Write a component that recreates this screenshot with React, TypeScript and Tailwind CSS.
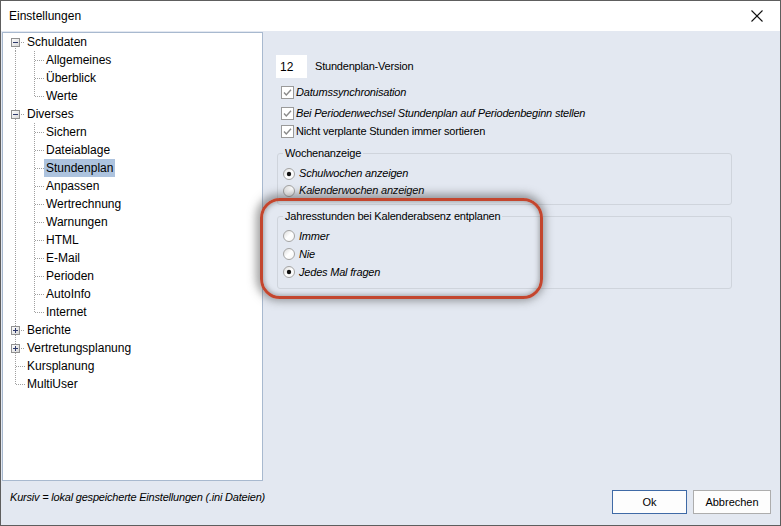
import React from 'react';

type Node = { label: string; level: 0 | 1; exp?: 'minus' | 'plus'; last?: boolean; selected?: boolean; first?: boolean; lastRoot?: boolean };

const tree: Node[] = [
  { label: 'Schuldaten', level: 0, exp: 'minus', first: true },
  { label: 'Allgemeines', level: 1 },
  { label: 'Überblick', level: 1 },
  { label: 'Werte', level: 1, last: true },
  { label: 'Diverses', level: 0, exp: 'minus' },
  { label: 'Sichern', level: 1 },
  { label: 'Dateiablage', level: 1 },
  { label: 'Stundenplan', level: 1, selected: true },
  { label: 'Anpassen', level: 1 },
  { label: 'Wertrechnung', level: 1 },
  { label: 'Warnungen', level: 1 },
  { label: 'HTML', level: 1 },
  { label: 'E-Mail', level: 1 },
  { label: 'Perioden', level: 1 },
  { label: 'AutoInfo', level: 1 },
  { label: 'Internet', level: 1, last: true },
  { label: 'Berichte', level: 0, exp: 'plus' },
  { label: 'Vertretungsplanung', level: 0, exp: 'plus' },
  { label: 'Kursplanung', level: 0 },
  { label: 'MultiUser', level: 0, lastRoot: true },
];

const DOT = '#a0a0a0';

function TreeLines({ n }: { n: Node }) {
  const w = n.level === 0 ? 22 : 41;
  const v0y1 = n.first ? 9 : 0;
  const v0y2 = n.lastRoot ? 10 : 18;
  return (
    <svg width={w} height={18} className="shrink-0" shapeRendering="crispEdges">
      <line x1={12.5} x2={12.5} y1={v0y1} y2={v0y2} stroke={DOT} strokeWidth={1} strokeDasharray="1 1" />
      {n.level === 1 && (
        <>
          <line x1={31.5} x2={31.5} y1={0} y2={n.last ? 10 : 18} stroke={DOT} strokeWidth={1} strokeDasharray="1 1" />
          <line x1={32} x2={41} y1={9.5} y2={9.5} stroke={DOT} strokeWidth={1} strokeDasharray="1 1" />
        </>
      )}
      {n.level === 0 && (
        <line x1={n.exp ? 18 : 13} x2={22} y1={9.5} y2={9.5} stroke={DOT} strokeWidth={1} strokeDasharray="1 1" />
      )}
      {n.exp && (
        <>
          <defs>
            <linearGradient id="expg" x1="0" y1="0" x2="1" y2="1">
              <stop offset="0" stopColor="#ffffff" />
              <stop offset="1" stopColor="#d6d6d6" />
            </linearGradient>
          </defs>
          <rect x={8.5} y={5.5} width={8} height={8} fill="url(#expg)" stroke="#919191" strokeWidth={1} />
          <line x1={10} x2={15} y1={9.5} y2={9.5} stroke="#2f3a6b" strokeWidth={1} />
          {n.exp === 'plus' && <line x1={12.5} x2={12.5} y1={7} y2={12} stroke="#2f3a6b" strokeWidth={1} />}
        </>
      )}
    </svg>
  );
}

function Checkbox() {
  return (
    <svg width={13} height={13} className="shrink-0">
      <rect x={0.5} y={0.5} width={12} height={12} fill="#ffffff" stroke="#9a9a9a" />
      <polyline points="3,6.5 5.3,9 10,3.8" fill="none" stroke="#8a8a8a" strokeWidth={1.4} />
    </svg>
  );
}

function Radio({ checked }: { checked?: boolean }) {
  return (
    <svg width={12} height={12} className="shrink-0">
      <defs>
        <linearGradient id="rg" x1="0" y1="0" x2="1" y2="1">
          <stop offset="0" stopColor="#d8d8d8" />
          <stop offset="0.5" stopColor="#ffffff" />
          <stop offset="1" stopColor="#f4f4f4" />
        </linearGradient>
      </defs>
      <circle cx={6} cy={6} r={5.5} fill="url(#rg)" stroke="#a3a3a3" strokeWidth={1} />
      {checked && <circle cx={6} cy={6} r={2.2} fill="#111111" />}
    </svg>
  );
}

const uiFont = { fontFamily: '"Liberation Sans", Arial, sans-serif' } as const;

export default function App() {
  return (
    <div
      className="relative w-[781px] h-[526px] border border-[#5e5e5e] flex flex-col bg-[#e3e8f1] text-black overflow-hidden"
      style={uiFont}
    >
      <div className="h-[30px] bg-white flex items-center justify-between pl-[8px] pr-[17px] shrink-0">
        <span className="text-[12px]">Einstellungen</span>
        <svg width={12} height={12} viewBox="0 0 12 12">
          <line x1={0.5} y1={0.5} x2={11.5} y2={11.5} stroke="#111" strokeWidth={1.1} />
          <line x1={11.5} y1={0.5} x2={0.5} y2={11.5} stroke="#111" strokeWidth={1.1} />
        </svg>
      </div>

      <div className="flex h-[450px] shrink-0">
        <div className="ml-[1px] mt-[1px] w-[261px] h-[449px] bg-white border border-[#a8b9cf] shrink-0 flex flex-col">
          {tree.map((n) => (
            <div key={n.label} className="h-[18px] flex items-center shrink-0">
              <TreeLines n={n} />
              <span
                className={
                  'h-[18px] leading-[18px] px-[2px] text-[12px] whitespace-nowrap ' +
                  (n.selected ? 'bg-[#adc3de]' : '')
                }
              >
                {n.label}
              </span>
            </div>
          ))}
        </div>

        <div className="flex-1 pl-[13px] pt-[24px] flex flex-col text-[11px] tracking-[-0.2px]">
          <div className="flex items-center h-[23px]">
            <div className="w-[31px] h-[23px] bg-white flex items-center pl-[4px] text-[12px] tracking-normal">12</div>
            <span className="ml-[8px]">Stundenplan-Version</span>
          </div>

          <div className="flex items-center h-[18px] mt-[5px] pl-[5px] gap-[2px]">
            <Checkbox />
            <span className="italic">Datumssynchronisation</span>
          </div>
          <div className="flex items-center h-[18px] mt-[3px] pl-[5px] gap-[2px]">
            <Checkbox />
            <span className="italic">Bei Periodenwechsel Stundenplan auf Periodenbeginn stellen</span>
          </div>
          <div className="flex items-center h-[18px] pl-[5px] gap-[2px]">
            <Checkbox />
            <span>Nicht verplante Stunden immer sortieren</span>
          </div>

          <fieldset className="mt-[7px] ml-[1px] w-[455px] border border-[#cfd4dc] rounded-[3px] pl-[5px] pb-[5px]">
            <legend className="px-[2px] h-[13px] leading-[13px]">Wochenanzeige</legend>
            <div className="pt-[5px] flex flex-col">
              <div className="flex items-center h-[17px] gap-[4px]">
                <Radio checked />
                <span className="italic">Schulwochen anzeigen</span>
              </div>
              <div className="flex items-center h-[17px] gap-[4px]">
                <Radio />
                <span className="italic">Kalenderwochen anzeigen</span>
              </div>
            </div>
          </fieldset>

          <fieldset className="mt-[5px] ml-[1px] w-[455px] border border-[#cfd4dc] rounded-[3px] pl-[5px] pb-[7px]">
            <legend className="px-[2px] h-[13px] leading-[13px]">Jahresstunden bei Kalenderabsenz entplanen</legend>
            <div className="pt-[4px] flex flex-col">
              <div className="flex items-center h-[18px] gap-[4px]">
                <Radio />
                <span className="italic">Immer</span>
              </div>
              <div className="flex items-center h-[18px] gap-[4px]">
                <Radio />
                <span className="italic">Nie</span>
              </div>
              <div className="flex items-center h-[18px] gap-[4px]">
                <Radio checked />
                <span className="italic">Jedes Mal fragen</span>
              </div>
            </div>
          </fieldset>
        </div>
      </div>

      <div className="flex-1 flex items-start justify-between pl-[9px] pr-[9px] text-[11px] tracking-[-0.2px]">
        <span className="italic mt-[9px] leading-[14px]">Kursiv = lokal gespeicherte Einstellungen (.ini Dateien)</span>
        <div className="flex gap-[6px] mt-[9px] tracking-normal">
          <button className="w-[75px] h-[24px] bg-[#fdfdfd] border border-[#3f6aa6] text-[11px]">Ok</button>
          <button className="w-[78px] h-[24px] bg-[#fdfdfd] border border-[#adadad] text-[11px]">Abbrechen</button>
        </div>
      </div>

      <div className="absolute left-[259px] top-[197px] w-[283px] h-[101px] rounded-[20px] border-[3px] border-[#c3462e] shadow-[-1px_-1px_8px_3px_rgba(70,70,70,0.5),inset_0_0_5px_1px_rgba(70,70,70,0.45)] pointer-events-none" />
    </div>
  );
}
